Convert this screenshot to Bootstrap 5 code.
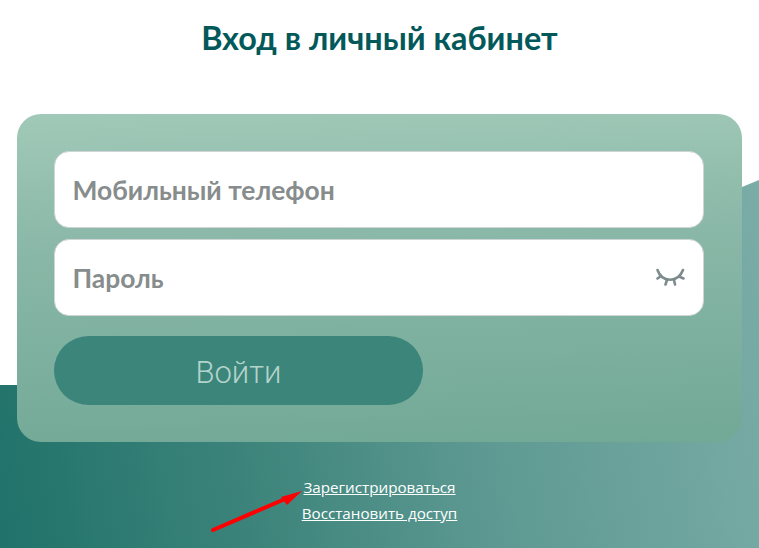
<!DOCTYPE html>
<html lang="ru">
<head>
<meta charset="utf-8">
<title>Вход</title>
<link href="https://cdn.jsdelivr.net/npm/bootstrap@5.3.0/dist/css/bootstrap.min.css" rel="stylesheet">
<style>
html,body{height:100%;margin:0;overflow:hidden;background:#fff}
.page-wrap{position:relative;width:759px;height:548px;overflow:hidden}
.bg-shape{position:absolute;inset:0;background:linear-gradient(80deg,#20726a 0%,#3e857c 32%,#5d9992 58%,#7eaea9 100%);clip-path:polygon(0 385px,17px 385px,742px 187px,759px 180px,759px 548px,0 548px)}
.page-inner{position:relative;padding:0 17px}
.login-title{font-family:Lato,"Noto Sans",sans-serif;font-weight:700;font-size:32.4px;line-height:38px;color:#03595a;margin:0;padding-top:19px;height:114px}
.login-panel{height:328px;padding:37px 38px 37px 37px;border-radius:24px;background:linear-gradient(178deg,#a1c9b8 0%,#8cb9a9 35%,#7fb1a0 65%,#72a896 100%)}
.login-field{position:relative;height:77px;margin-bottom:11px}
.login-input{height:100%;padding:0 17.5px;border:1px solid #cfd4d6;border-radius:15px;background:#fff;font-family:Lato,"Noto Sans",sans-serif;font-weight:700;font-size:26.4px;color:#878c8c}
.login-input::placeholder{color:#878c8c;opacity:1}
.login-input:focus{box-shadow:none;border-color:#cfd4d6}
.eye-icon{position:absolute;right:18px;top:29px;width:30px;height:20px}
.login-btn{display:block;width:369px;height:69px;margin-top:20px;padding:5px 0 0;border:0;border-radius:35px;background:#3c857a;color:#b3d3cb;font-family:Roboto,"Noto Sans",sans-serif;font-weight:300;font-size:31px}
.login-links{padding-top:35px;font-family:"Open Sans","Noto Sans",sans-serif;font-size:15.2px;line-height:20px}
.login-links a{color:#fff;text-decoration:underline;display:block;margin-bottom:6px}
.red-arrow{position:absolute;left:205px;top:478px;width:105px;height:56px}
</style>
</head>
<body>
<div class="page-wrap">
  <div class="bg-shape"></div>
  <div class="page-inner">
    <h1 class="login-title text-center">Вход в личный кабинет</h1>
    <form class="login-panel">
      <div class="login-field"><input class="form-control login-input" type="text" placeholder="Мобильный телефон"></div>
      <div class="login-field">
        <input class="form-control login-input" type="password" placeholder="Пароль">
        <svg class="eye-icon" viewBox="0 0 30 20" fill="none" stroke="#7d8b8c" stroke-width="2.6" stroke-linecap="round">
          <path d="M1.5 2C6 15 22 15 27 2"/>
          <path d="M5 8L1.5 10.5M23 8.5L27.5 10.5M11 12L9.5 16.5M18 12L19 16.5"/>
        </svg>
      </div>
      <button class="login-btn" type="button">Войти</button>
    </form>
    <div class="login-links text-center">
      <a href="#">Зарегистрироваться</a>
      <a href="#">Восстановить доступ</a>
    </div>
  </div>
  <svg class="red-arrow" viewBox="0 0 105 56">
    <path d="M8 52L80 21" stroke="#f00" stroke-width="4" stroke-linecap="round"/>
    <path d="M97 13L76 19L82 27Z" fill="#f00"/>
  </svg>
</div>
<script src="https://cdn.jsdelivr.net/npm/bootstrap@5.3.0/dist/js/bootstrap.bundle.min.js"></script>
</body>
</html>
